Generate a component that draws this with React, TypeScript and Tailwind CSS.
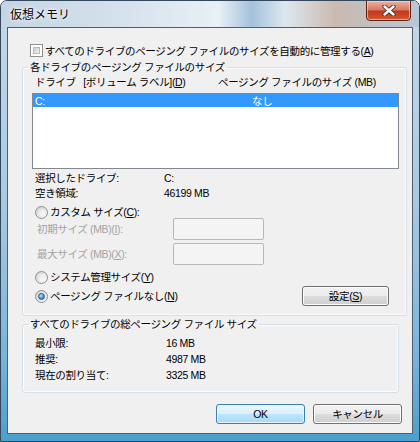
import React from 'react';

const font = "font-['Liberation_Sans','Noto_Sans_CJK_JP',sans-serif]";

function U({ c }: { c: string }) {
  return <span className="underline underline-offset-1">{c}</span>;
}

function Checkbox() {
  return (
    <span className="block w-[13px] h-[13px] border border-[#8f8f8f] bg-white p-[2px]">
      <span className="block w-full h-full bg-[linear-gradient(135deg,#c9c9c9,#f5f5f5)] border border-[#b9b9b9]" />
    </span>
  );
}

function Radio({ checked = false }: { checked?: boolean }) {
  return (
    <span className="flex items-center justify-center w-[13px] h-[13px] shrink-0 rounded-full border border-[#8f8f8f] bg-[linear-gradient(135deg,#d0d0d0,#fafafa)]">
      {checked ? (
        <span className="block w-[7px] h-[7px] rounded-full border border-[#2c5e8c] bg-[radial-gradient(circle_at_40%_35%,#bfe6fb,#3e8fd0_60%,#1b5c9a)]" />
      ) : (
        <span className="block w-[7px] h-[7px] rounded-full bg-[linear-gradient(135deg,#e4e4e4,#fbfbfb)]" />
      )}
    </span>
  );
}

function Button({ children, primary = false, className = '' }: { children: React.ReactNode; primary?: boolean; className?: string }) {
  return (
    <div
      className={
        primary
          ? `flex items-center justify-center h-[20px] rounded-[3px] border border-[#3c7fb1] shadow-[inset_0_0_0_1px_#e6f4fc] bg-[linear-gradient(180deg,#eaf6fd_0%,#d9f0fc_50%,#bee6fd_50%,#a7d9f5_100%)] ${className}`
          : `flex items-center justify-center h-[20px] rounded-[3px] border border-[#707070] shadow-[inset_0_0_0_1px_#fcfcfc] bg-[linear-gradient(180deg,#f2f2f2_0%,#ebebeb_50%,#dddddd_50%,#cfcfcf_100%)] ${className}`
      }
    >
      {children}
    </div>
  );
}

function CloseButton() {
  return (
    <div className="-mt-[1px] mr-[8px] w-[45px] h-[21px] rounded-b-[4px] border border-[#5c2418] bg-[linear-gradient(180deg,#eab3a4_0%,#d97a62_45%,#c2391d_55%,#d3582f_100%)] shadow-[inset_0_0_0_1px_rgba(255,220,200,0.6)] flex items-center justify-center">
      <svg width="14" height="11" viewBox="0 0 14 11">
        <path d="M2.5 1.5 L11.5 9.5 M11.5 1.5 L2.5 9.5" stroke="#4a2a22" strokeWidth="4.2" strokeLinecap="round" />
        <path d="M2.5 1.5 L11.5 9.5 M11.5 1.5 L2.5 9.5" stroke="#ffffff" strokeWidth="2.4" strokeLinecap="round" />
      </svg>
    </div>
  );
}

function Field() {
  return <div className="w-[91px] h-[22px] border border-[#b8b8b8] rounded-[2px] bg-[#f4f4f4]" />;
}

export default function App() {
  const totals = [
    ['最小限:', '16 MB'],
    ['推奨:', '4987 MB'],
    ['現在の割り当て:', '3325 MB'],
  ];

  return (
    <div className={`w-[420px] h-[442px] bg-white ${font} text-[10.5px] leading-[12px] tracking-[-0.35px] text-black`}>
      <div className="w-[420px] h-[442px] rounded-t-[7px] border border-[#34485c] bg-[linear-gradient(180deg,#c6d8e8_0%,#a9c9e2_45%,#7ab5dc_80%,#4c9fcc_100%)] flex flex-col overflow-hidden">
        {/* Title bar */}
        <div className="h-[26px] shrink-0 flex items-start bg-[linear-gradient(90deg,#c4d4e3_0%,#d6e2ed_30%,#e9f0f6_52%,#a3c2dc_60%,#dde7ef_68%,#cbb9b0_80%,#b7c8d6_100%)]">
          <div className="flex-1 pl-[9px] pt-[7px] text-[12px] leading-[14px] tracking-normal [text-shadow:0_0_6px_#fff,0_0_3px_#fff]">仮想メモリ</div>
          <CloseButton />
        </div>

        {/* Client area */}
        <div className="mx-[6px] h-[407px] shrink-0 border border-[#4c6072] bg-[#f0f0f0] flex flex-col">
          <div className="mt-[16px] ml-[22px] h-[13px] flex items-center gap-[2px]">
            <Checkbox />
            <span>
              すべてのドライブのページング ファイルのサイズを自動的に管理する(<U c="A" />)
            </span>
          </div>

          <fieldset className="mt-[4px] ml-[14px] w-[385px] border border-[#d5dfe5] rounded-[3px] shadow-[inset_0_0_0_1px_#fbfbfb] pb-[9px]">
            <legend className="ml-[5px] px-[2px] leading-[12px]">各ドライブのページング ファイルのサイズ</legend>

            <div className="mt-[3px] ml-[12px] h-[12px] flex">
              <span className="w-[183px]">
                ドライブ&nbsp;&nbsp; [ボリューム ラベル](<U c="D" />)
              </span>
              <span>ページング ファイルのサイズ (MB)</span>
            </div>

            <div className="mt-[5px] ml-[9px] w-[367px] h-[76px] border border-[#828790] bg-white">
              <div className="h-[13px] bg-[#3399ff] text-white flex items-center pl-[2px]">
                <span className="w-[217px]">C:</span>
                <span>なし</span>
              </div>
            </div>

            <div className="mt-[3px] ml-[12px] h-[12px] flex">
              <span className="w-[129px]">選択したドライブ:</span>
              <span>C:</span>
            </div>
            <div className="mt-[3px] ml-[12px] h-[12px] flex">
              <span className="w-[129px]">空き領域:</span>
              <span>46199 MB</span>
            </div>

            <div className="mt-[7px] ml-[12px] h-[12px] flex items-center gap-[2px]">
              <Radio />
              <span>
                カスタム サイズ(<U c="C" />):
              </span>
            </div>
            <div className="ml-[14px] h-[22px] flex items-center text-[#a3a3a3]">
              <span className="w-[136px]">
                初期サイズ (MB)(<U c="I" />):
              </span>
              <Field />
            </div>
            <div className="mt-[3px] ml-[14px] h-[22px] flex items-center text-[#a3a3a3]">
              <span className="w-[136px]">
                最大サイズ (MB)(<U c="X" />):
              </span>
              <Field />
            </div>

            <div className="mt-[6px] ml-[12px] h-[12px] flex items-center gap-[2px]">
              <Radio />
              <span>
                システム管理サイズ(<U c="Y" />)
              </span>
            </div>
            <div className="mt-[3px] ml-[12px] mr-[17px] h-[20px] flex items-center">
              <Radio checked />
              <span className="ml-[2px] flex-1">
                ページング ファイルなし(<U c="N" />)
              </span>
              <Button className="w-[87px]">
                設定(<U c="S" />)
              </Button>
            </div>
          </fieldset>

          <fieldset className="mt-[2px] ml-[14px] w-[377px] border border-[#d5dfe5] rounded-[3px] shadow-[inset_0_0_0_1px_#fbfbfb] pt-[5px] pb-[9px]">
            <legend className="ml-[5px] px-[2px] leading-[12px]">すべてのドライブの総ページング ファイル サイズ</legend>
            {totals.map(([label, value]) => (
              <div key={label} className="ml-[12px] h-[16px] flex items-center">
                <span className="w-[131px]">{label}</span>
                <span>{value}</span>
              </div>
            ))}
          </fieldset>

          <div className="mt-[11px] mr-[10px] flex justify-end gap-[8px]">
            <Button primary className="w-[89px]">
              OK
            </Button>
            <Button className="w-[89px]">キャンセル</Button>
          </div>
        </div>
      </div>
    </div>
  );
}
